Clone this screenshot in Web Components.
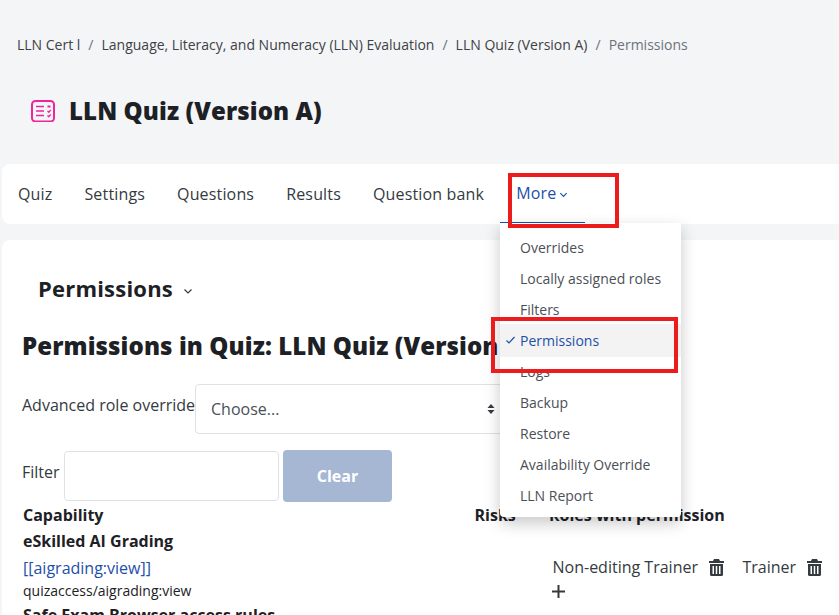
<!DOCTYPE html>
<html>
<head>
<meta charset="utf-8">
<title>Permissions</title>
<style>
    html, body { margin: 0; height: 615px; overflow: hidden; }
    body { background: #f4f5f7; font-family: "Open Sans", sans-serif; color: #1d2125; position: relative; }
</style>
</head>
<body>
<crumb-bar></crumb-bar>
<page-title>LLN Quiz (Version A)</page-title>
<tab-nav></tab-nav>
<main-card></main-card>
<more-menu></more-menu>
<red-box style="left:508px;top:173px;width:103px;height:47px"></red-box>
<red-box style="left:491px;top:317px;width:179px;height:48px"></red-box>

<script>
const trash = `<svg width="15" height="17" viewBox="0 0 15 17" fill="currentColor"><path d="M5 0h5l1 2h4v2H0V2h4z"/><path fill-rule="evenodd" d="M1 5h13v10.5a1.5 1.5 0 0 1-1.5 1.5h-10A1.5 1.5 0 0 1 1 15.500zM3.500 7v8h1.500V7zM6.750 7v8h1.500V7zM10 7v8h1.500V7z"/></svg>`

const chevron = (size, stroke) => `<svg width="${size}" height="${size}" viewBox="0 0 10 10" fill="none" stroke="currentColor" stroke-width="${stroke}"><path d="M1.500 3.500 5 7l3.500-3.500"/></svg>`

class CrumbBar extends HTMLElement {
    constructor() {
        super()
        this.attachShadow({ mode: "open" }).innerHTML = `
        <style>
            :host { display: flex; height: 20px; padding: 35px 0 0 17px; font-size: 14px; line-height: 20px; color: #3e4145; white-space: nowrap; }
            i { font-style: normal; color: #6a737b; padding: 0 8px; }
            span:last-child { color: #6a737b; }
        </style>
        <a>LLN Cert l</a><i>/</i><a>Language, Literacy, and Numeracy (LLN) Evaluation</a><i>/</i><a>LLN Quiz (Version A)</a><i>/</i><span>Permissions</span>
        `
    }
}
customElements.define('crumb-bar', CrumbBar)

class PageTitle extends HTMLElement {
    constructor() {
        super()
        this.attachShadow({ mode: "open" }).innerHTML = `
        <style>
            :host { display: flex; align-items: center; height: 34px; padding: 39px 0 0 31px; }
            svg { margin-right: 14px; }
            h1 { margin: 0; font-size: 24px; line-height: 34px; font-weight: 800; letter-spacing: .1px; color: #1d2125; white-space: nowrap; }
        </style>
        <svg width="24" height="22" viewBox="0 0 24 22" fill="none" stroke="#f0259b" stroke-width="1.500">
            <rect x="1" y="1" width="22" height="20.500" rx="3.500" stroke-width="2"/>
            <path d="M5 6.500h8M5 11h8M5 15.500h8"/>
            <path d="M16.500 5.500h3v2h-3z" fill="#f0259b" stroke="none"/>
            <path d="M16.500 11l1.300 1.200 2-2.400M16.500 15.500l1.300 1.200 2-2.400" stroke-width="1.300"/>
        </svg>
        <h1><slot></slot></h1>
        `
    }
}
customElements.define('page-title', PageTitle)

class TabNav extends HTMLElement {
    constructor() {
        super()
        let tabs = ['Quiz', 'Settings', 'Questions', 'Results', 'Question bank']
        this.attachShadow({ mode: "open" }).innerHTML = `
        <style>
            :host { display: flex; height: 60px; margin: 36px 0 0 2px; background: #fff; border-radius: 8px 0 0 8px; font-size: 16px; letter-spacing: .16px; color: #343a40; box-sizing: border-box; }
            a { display: block; padding: 18px 16px 0; line-height: 24px; white-space: nowrap; }
            a.more { width: 53px; height: 41px; padding-top: 17px; color: #1d4fa8; border-bottom: 2px solid #1d4fa8; }
            a.more svg { margin-left: 3px; }
        </style>
        ${tabs.map(t => `<a>${t}</a>`).join('')}
        <a class="more">More${chevron(9, 1.300)}</a>
        `
    }
}
customElements.define('tab-nav', TabNav)

class MainCard extends HTMLElement {
    constructor() {
        super()
        this.attachShadow({ mode: "open" }).innerHTML = `
        <style>
            :host { display: block; margin: 16px 0 0 2px; height: 400px; background: #fff; border-radius: 8px 0 0 0; font-size: 16px; color: #343a40; padding-left: 20px; position: relative; }
            .tertiary { display: flex; align-items: center; gap: 10px; padding: 32px 0 0 16px; height: 33px; font-size: 22px; line-height: 33px; font-weight: 700; letter-spacing: .2px; color: #1d2125; }
            .tertiary svg { margin-top: 5px; color: #343a40; }
            h2 { margin: 24px 0 0; font-size: 24px; line-height: 34px; font-weight: 800; letter-spacing: .1px; color: #1d2125; white-space: nowrap; }
            .row { display: flex; }
            .role { margin-top: 21px; height: 50px; line-height: 22px; }
            .role label { padding-top: 10px; width: 173px; white-space: nowrap; }
            .select { box-sizing: border-box; width: 320px; height: 50px; display: flex; align-items: center; justify-content: space-between; border: 1px solid #dee2e6; border-radius: 4px; padding: 0 18px 0 15px; color: #495057; line-height: 47px; }
            .filter { margin-top: 16px; height: 52px; }
            .filter label { padding-top: 11px; width: 42px; line-height: 22px; }
            .input { box-sizing: border-box; width: 215px; height: 50px; margin-top: 1px; border: 1px solid #dee2e6; border-radius: 4px; }
            .clear { box-sizing: border-box; width: 109px; height: 52px; margin-left: 4px; background: #a6b7d4; color: #fff; font-weight: 700; border-radius: 4px; text-align: center; line-height: 52px; }
            .cols { position: relative; height: 113px; padding: 0 0 0 1px; }
            b { display: block; font-weight: 700; color: #1d2125; line-height: 24px; }
            .head { height: 26px; padding-top: 1px; }
            .head b { position: absolute; top: 1px; }
            .link { color: #1d4fa8; line-height: 24px; margin-top: 3px; }
            .path { font-size: 14px; line-height: 20px; color: #1d2125; margin-top: 1px; }
            .next { line-height: 24px; margin-top: 2px; white-space: nowrap; }
            .roles { position: absolute; left: 530.500px; top: 53px; width: 290px; line-height: 24px; }
            .roles .line { display: flex; align-items: center; white-space: nowrap; }
            .roles svg { margin-left: 11px; color: #343a40; }
            .roles .gap { margin-left: 18.500px; }
            .plus { display: block; margin-top: 6px; }
        </style>
        <div class="tertiary"><span>Permissions</span>${chevron(10, 1.200)}</div>
        <h2>Permissions in Quiz: LLN Quiz (Version A)</h2>
        <div class="row role">
            <label>Advanced role override</label>
            <div class="select"><span>Choose...</span>
                <svg width="10" height="12" viewBox="0 0 10 12" fill="#343a40"><path d="M5 1l3.500 4h-7zM5 11 1.500 7h7z"/></svg>
            </div>
        </div>
        <div class="row filter">
            <label>Filter</label>
            <div class="input"></div>
            <div class="clear">Clear</div>
        </div>
        <div class="cols">
            <div class="head">
                <b style="left:1px">Capability</b>
                <b style="left:452.500px">Risks</b>
                <b style="left:527px">Roles with permission</b>
            </div>
            <b>eSkilled AI Grading</b>
            <div class="link">[[aigrading:view]]</div>
            <div class="path">quizaccess/aigrading:view</div>
            <b class="next">Safe Exam Browser access rules</b>
            <div class="roles">
                <div class="line"><span>Non-editing Trainer</span>${trash}<span class="gap">Trainer</span>${trash}</div>
                <svg class="plus" style="margin-left:-1px" width="13" height="13" viewBox="0 0 13 13" fill="none" stroke="#343a40" stroke-width="2"><path d="M6.500 0v13M0 6.500h13"/></svg>
            </div>
        </div>
        `
    }
}
customElements.define('main-card', MainCard)

class MoreMenu extends HTMLElement {
    constructor() {
        super()
        let items = ['Overrides', 'Locally assigned roles', 'Filters', 'Permissions', 'Logs', 'Backup', 'Restore', 'Availability Override', 'LLN Report']
        this.attachShadow({ mode: "open" }).innerHTML = `
        <style>
            :host { display: block; position: absolute; left: 500px; top: 223px; width: 181px; height: 294px; box-sizing: border-box; padding-top: 9px; background: #fff; border-radius: 0 0 4px 4px; box-shadow: 0 6px 16px rgba(0,0,0,.22); font-size: 14px; color: #4b5056; }
            a { display: block; position: relative; height: 31px; line-height: 31px; padding-left: 20px; white-space: nowrap; }
            a.active { color: #1d4fa8; background: #f3f3f3; height: 33px; line-height: 33px; margin: -1px 0; }
            a svg { position: absolute; left: 6px; top: 12px; }
        </style>
        ${items.map(t => t == 'Permissions'
            ? `<a class="active"><svg width="9" height="8" viewBox="0 0 9 8" fill="none" stroke="#1d4fa8" stroke-width="1.200"><path d="M.5 4.500 3 7l5.500-6"/></svg>${t}</a>`
            : `<a>${t}</a>`).join('')}
        `
    }
}
customElements.define('more-menu', MoreMenu)

class RedBox extends HTMLElement {
    constructor() {
        super()
        this.attachShadow({ mode: "open" }).innerHTML = `
        <style>
            :host { display: block; position: absolute; border: 4px solid #ec1c1c; }
        </style>
        `
    }
}
customElements.define('red-box', RedBox)
</script>
</body>
</html>
